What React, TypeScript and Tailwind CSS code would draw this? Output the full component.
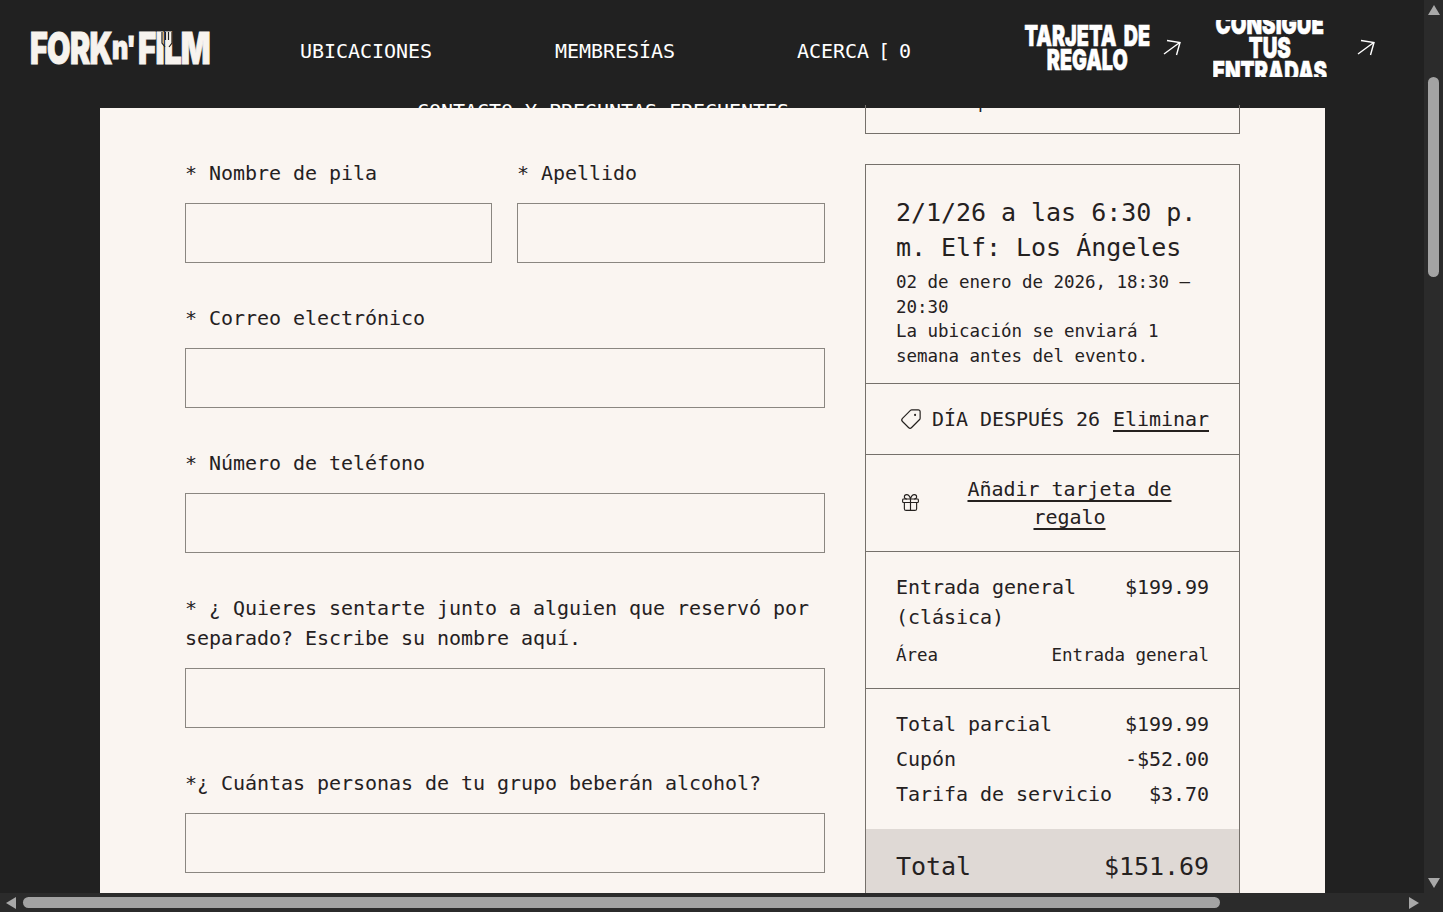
import { Gift, Tag } from "lucide-react";

const Arrow = () => (
  <svg width="20" height="18" viewBox="0 0 20 18" fill="none" stroke="white" strokeWidth="1.4" className="flex-none">
    <path d="M1 15 L16 4 M4 1.5 L17 3.5 L13.5 16" />
  </svg>
);

const Field = ({ label }: { label: string }) => (
  <div>
    <label className="block text-[20px] leading-[30px]">{label}</label>
    <div className="mt-[15px] h-[60px] border border-[#8a8681]" />
  </div>
);

const Triangle = ({ dir }: { dir: "up" | "down" | "left" | "right" }) => {
  if (dir === "up" || dir === "down") {
    return (
      <svg width="12" height="10" viewBox="0 0 12 10" fill="#a8a8a8" className="flex-none">
        <polygon points={dir === "up" ? "6,0 12,10 0,10" : "0,0 12,0 6,10"} />
      </svg>
    );
  }
  return (
    <svg width="10" height="12" viewBox="0 0 10 12" fill="#a8a8a8" className="flex-none">
      <polygon points={dir === "left" ? "10,0 10,12 0,6" : "0,0 10,6 0,12"} />
    </svg>
  );
};

export default function App() {
  return (
    <div className="flex h-[912px] w-[1443px] flex-col overflow-hidden bg-[#212121] font-['DejaVu_Sans_Mono',monospace] tracking-[-0.04px] text-[#25211f]">
      <div className="flex min-h-0 flex-1">
        <div className="flex min-w-0 flex-1 flex-col overflow-hidden">
          {/* Header */}
          <header className="h-[108px] flex-none overflow-hidden bg-[#212121] text-white">
            <div className="flex h-[96px] items-center pl-[30px]">
              {/* Logo */}
              <div className="relative flex h-[32px] w-[181px] flex-none items-center font-['Inter',sans-serif] font-black text-[#f7f3ee] [-webkit-text-stroke:1px_#f7f3ee]">
                <div className="flex w-[82px] flex-none justify-start">
                  <span className="origin-left scale-x-[0.69] text-[44px] leading-[32px] tracking-[-1px]">FORK</span>
                </div>
                <div className="flex w-[26px] flex-none justify-start">
                  <span className="origin-left scale-x-[0.78] text-[32px] leading-[32px] tracking-[-1px]">n'</span>
                </div>
                <div className="flex w-[73px] flex-none justify-start">
                  <span className="origin-left scale-x-[0.71] text-[44px] leading-[32px] tracking-[-1px]">FILM</span>
                </div>
                <svg width="14" height="16" viewBox="0 0 14 16" fill="none" stroke="#212121" strokeWidth="1.2" className="absolute left-[130px] top-0">
                  <path d="M5.5 0 V8 M8.5 0 V8 M2 0 V11 L5 15 M12 0 V11 L9 15" />
                </svg>
              </div>

              <span className="mt-[6px] ml-[89px] flex-none text-[20px]">UBICACIONES</span>
              <span className="mt-[6px] ml-[123px] flex-none text-[20px]">MEMBRESÍAS</span>
              <span className="mt-[6px] ml-[122px] w-[120px] flex-none text-[20px] [word-spacing:-3px]">ACERCA [ 0</span>

              {/* Tarjeta de regalo */}
              <div className="ml-[107px] flex w-[126px] flex-none justify-center font-['Inter',sans-serif] font-black">
                <span className="scale-x-[0.68] whitespace-nowrap text-center text-[29px] leading-[24px] tracking-[0px] [word-spacing:5px] [-webkit-text-stroke:0.6px_white]">
                  TARJETA DE
                  <br />
                  REGALO
                </span>
              </div>
              <div className="ml-[13px] mt-[-1px]">
                <Arrow />
              </div>

              {/* Consigue tus entradas */}
              <div className="ml-[30px] flex h-[57px] w-[114px] flex-none items-center justify-center overflow-hidden font-['Inter',sans-serif] font-black">
                <span className="scale-x-[0.7] whitespace-nowrap text-center text-[29px] leading-[24px] tracking-[0px] [-webkit-text-stroke:0.6px_white]">
                  CONSIGUE
                  <br />
                  TUS
                  <br />
                  ENTRADAS
                </span>
              </div>
              <div className="ml-[30px] mt-[-1px]">
                <Arrow />
              </div>
            </div>
            <div className="whitespace-nowrap pl-[417px] text-[20px] leading-[30px]">CONTACTO Y PREGUNTAS FRECUENTES</div>
          </header>

          {/* Card */}
          <main className="ml-[100px] flex h-[900px] w-[1225px] flex-none gap-[40px] bg-[#faf5f1] pl-[85px]">
            {/* Form */}
            <form className="flex w-[640px] flex-none flex-col gap-[40px] pt-[50px]">
              <div className="grid grid-cols-[307px_308px] gap-[25px]">
                <Field label="* Nombre de pila" />
                <Field label="* Apellido" />
              </div>
              <Field label="* Correo electrónico" />
              <Field label="* Número de teléfono" />
              <Field label="* ¿ Quieres sentarte junto a alguien que reservó por separado? Escribe su nombre aquí." />
              <Field label="*¿ Cuántas personas de tu grupo beberán alcohol?" />
            </form>

            {/* Order summary */}
            <aside className="w-[375px] flex-none">
              <div className="relative mt-[-3px] h-[29px] overflow-hidden border-x border-b border-[#75706b]">
                <p className="mt-[-15px] pl-[112px] text-[17.5px] leading-[24px]">p</p>
              </div>

              <div className="mt-[30px] border border-[#75706b]">
                <div className="border-b border-[#75706b] px-[30px] pb-[15px] pt-[30px]">
                  <h2 className="text-[25px] leading-[35px]">2/1/26 a las 6:30 p. m. Elf: Los Ángeles</h2>
                  <p className="mt-[5px] text-[17.5px] leading-[24.5px]">
                    02 de enero de 2026, 18:30 – 20:30
                    <br />
                    La ubicación se enviará 1 semana antes del evento.
                  </p>
                </div>

                <div className="flex h-[71px] items-center border-b border-[#75706b] pl-[34px] pr-[30px] text-[20px]">
                  <Tag size={22} strokeWidth={1.3} className="rotate-90" />
                  <span className="ml-[10px] whitespace-nowrap">DÍA DESPUÉS 26</span>
                  <a href="#" className="ml-[13px] underline underline-offset-[4px]">
                    Eliminar
                  </a>
                </div>

                <div className="flex h-[97px] items-center border-b border-[#75706b] pl-[34px] pr-[30px] text-[20px] leading-[28px]">
                  <Gift size={21} strokeWidth={1.3} className="mt-[-2px] flex-none" />
                  <a href="#" className="ml-[9px] flex-1 text-center underline underline-offset-[4px]">
                    Añadir tarjeta de
                    <br />
                    regalo
                  </a>
                </div>

                <div className="border-b border-[#75706b] px-[30px] pb-[21px] pt-[20px]">
                  <div className="flex items-start justify-between text-[20px] leading-[30px]">
                    <span className="w-[190px]">Entrada general (clásica)</span>
                    <span>$199.99</span>
                  </div>
                  <div className="mt-[11px] flex justify-between text-[17.5px] leading-[24px]">
                    <span>Área</span>
                    <span>Entrada general</span>
                  </div>
                </div>

                <div className="px-[30px] pb-[17px] pt-[18px] text-[20px] leading-[35px]">
                  <div className="flex justify-between">
                    <span>Total parcial</span>
                    <span>$199.99</span>
                  </div>
                  <div className="flex justify-between">
                    <span>Cupón</span>
                    <span>-$52.00</span>
                  </div>
                  <div className="flex justify-between">
                    <span>Tarifa de servicio</span>
                    <span>$3.70</span>
                  </div>
                </div>

                <div className="flex justify-between bg-[#dfd9d5] px-[30px] pb-[30px] pt-[20px] text-[25px] leading-[35px]">
                  <span>Total</span>
                  <span>$151.69</span>
                </div>
              </div>
            </aside>
          </main>
        </div>

        {/* Vertical scrollbar */}
        <div className="flex w-[19px] flex-none flex-col items-center bg-[#2b2b2b]">
          <div className="mt-[5px] h-[10px]">
            <Triangle dir="up" />
          </div>
          <div className="mt-[62px] h-[200px] w-[11px] rounded-full bg-[#a3a3a3]" />
          <div className="mt-auto mb-[5px] h-[10px]">
            <Triangle dir="down" />
          </div>
        </div>
      </div>

      {/* Horizontal scrollbar */}
      <div className="flex h-[19px] flex-none items-center bg-[#2b2b2b] pl-[6px] pr-[24px]">
        <Triangle dir="left" />
        <div className="ml-[7px] h-[11px] w-[1197px] rounded-full bg-[#a3a3a3]" />
        <div className="ml-auto">
          <Triangle dir="right" />
        </div>
      </div>
    </div>
  );
}
